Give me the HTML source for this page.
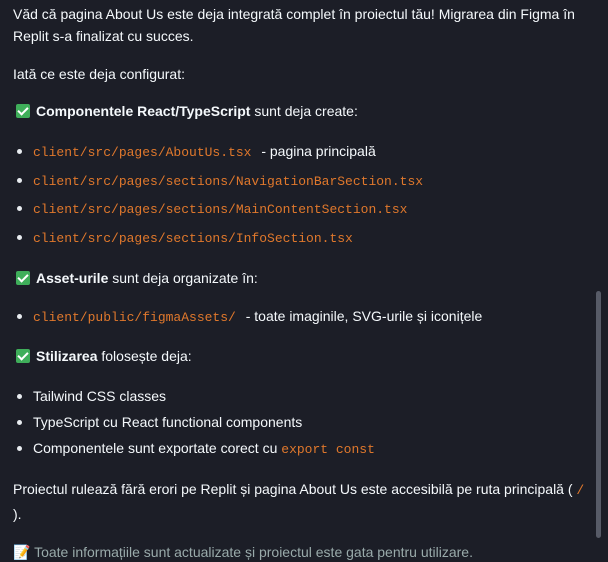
<!DOCTYPE html>
<html><head><meta charset="utf-8"><style>
body{margin:0;background:#1c1e27;width:608px;height:547px;overflow:hidden;position:relative;font-family:"Liberation Sans",sans-serif;font-size:14px;color:#f5f9fc}
.l{position:absolute;left:13px;white-space:nowrap;line-height:20px}
.b{left:33px}
.b:before{content:"";position:absolute;left:-16px;top:8px;width:5px;height:5px;border-radius:50%;background:#e8ecf0}
code{font-family:"Liberation Mono",monospace;font-size:13px;color:#e0782c;margin-right:6px}
.ck{display:inline-block;width:14px;height:14px;background:#3fae5a;border-radius:2px;vertical-align:-2px;margin-right:6px;position:relative}
.ck:after{content:"";position:absolute;left:4px;top:1px;width:4px;height:8px;border:solid #fff;border-width:0 2px 2px 0;transform:rotate(45deg)}
b{font-weight:bold}
.sb{position:absolute;left:596px;top:291px;width:5px;height:247px;background:#575b67;border-radius:3px}
</style></head><body>
<div class="l" style="top:4px">Văd că pagina About Us este deja integrată complet în proiectul tău! Migrarea din Figma în</div>
<div class="l" style="top:26px">Replit s-a finalizat cu succes.</div>
<div class="l" style="top:64px">Iată ce este deja configurat:</div>
<div class="l" style="top:101px;left:16px"><span class="ck"></span><b>Componentele React/TypeScript</b> sunt deja create:</div>
<div class="l b" style="top:141px"><code>client/src/pages/AboutUs.tsx</code> - pagina principală</div>
<div class="l b" style="top:170px"><code>client/src/pages/sections/NavigationBarSection.tsx</code></div>
<div class="l b" style="top:198px"><code>client/src/pages/sections/MainContentSection.tsx</code></div>
<div class="l b" style="top:227px"><code>client/src/pages/sections/InfoSection.tsx</code></div>
<div class="l" style="top:268px;left:16px"><span class="ck"></span><b>Asset-urile</b> sunt deja organizate în:</div>
<div class="l b" style="top:306px"><code>client/public/figmaAssets/</code> - toate imaginile, SVG-urile și iconițele</div>
<div class="l" style="top:346px;left:16px"><span class="ck"></span><b>Stilizarea</b> folosește deja:</div>
<div class="l b" style="top:386px">Tailwind CSS classes</div>
<div class="l b" style="top:412px">TypeScript cu React functional components</div>
<div class="l b" style="top:438px">Componentele sunt exportate corect cu <code>export const</code></div>
<div class="l" style="top:479px">Proiectul rulează fără erori pe Replit și pagina About Us este accesibilă pe ruta principală ( <code style="margin:0">/</code></div>
<div class="l" style="top:504px">).</div>
<div class="l" style="top:542px;color:#9aa">📝 Toate informațiile sunt actualizate și proiectul este gata pentru utilizare.</div>
<div class="sb"></div>
</body></html>
